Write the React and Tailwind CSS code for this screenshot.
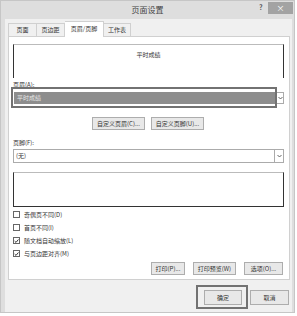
import React from "react";

const font = { fontFamily: '"Noto Sans CJK SC", "Noto Sans", sans-serif' };

function Btn({ children, className = "" }) {
  return (
    <div
      className={
        "flex items-center justify-center border border-[#adadad] bg-[#e8e8e8] text-[6px] text-[#333] leading-none " +
        className
      }
    >
      {children}
    </div>
  );
}

function Check({ label, checked }) {
  return (
    <div className="flex h-[13px] items-center gap-[4px] pl-[4px]">
      <div className="flex h-[7px] w-[7px] items-center justify-center border border-[#666] bg-white">
        {checked && (
          <svg width="6" height="6" viewBox="0 0 6 6">
            <path d="M0.8 3.1 L2.4 4.7 L5.3 1.2" stroke="#222" strokeWidth="1.1" fill="none" />
          </svg>
        )}
      </div>
      <span className="text-[6px] leading-none text-[#333]">{label}</span>
    </div>
  );
}

function Arrow() {
  return (
    <svg width="5" height="4" viewBox="0 0 5 4">
      <path d="M0.5 1 L2.5 3 L4.5 1" stroke="#555" strokeWidth="0.9" fill="none" />
    </svg>
  );
}

export default function App() {
  return (
    <div className="h-[316px] w-[297px] overflow-hidden bg-white" style={font}>
      <div className="flex h-[313px] w-[295px] flex-col border border-[#c6c6c6] bg-[#dedede]">
        {/* title bar */}
        <div className="relative flex h-[18px] items-center justify-center">
          <span className="text-[8px] leading-none text-[#444]">页面设置</span>
          <span className="absolute left-[258px] top-[3px] text-[7px] font-bold leading-none text-[#555]">?</span>
          <div className="absolute left-[267px] top-[1px] flex h-[12px] w-[25px] items-center justify-center bg-[#a3a3a3] text-[8px] leading-none text-white">
            ×
          </div>
        </div>

        {/* client */}
        <div className="ml-[4px] mr-[2px] flex flex-1 flex-col bg-[#f0f0f0] pl-[3px] pr-[2px]">
          {/* tabs */}
          <div className="flex h-[17px] items-end pt-[2px]">
            <div className="flex h-[13px] w-[29px] items-center justify-center border border-b-0 border-[#d0d0d0] bg-[#f0f0f0] text-[6px] leading-none text-[#333]">
              页面
            </div>
            <div className="flex h-[13px] w-[28px] items-center justify-center border border-b-0 border-l-0 border-[#d0d0d0] bg-[#f0f0f0] text-[6px] leading-none text-[#333]">
              页边距
            </div>
            <div className="relative -mb-[1px] flex h-[16px] w-[39px] items-center justify-center border border-b-0 border-l-0 border-[#d0d0d0] bg-white pb-[2px] text-[6px] leading-none text-[#333]">
              页眉/页脚
            </div>
            <div className="flex h-[13px] w-[27px] items-center justify-center border border-b-0 border-l-0 border-[#d0d0d0] bg-[#f0f0f0] text-[6px] leading-none text-[#333]">
              工作表
            </div>
          </div>

          {/* panel */}
          <div className="flex h-[244px] flex-col border border-[#d0d0d0] bg-white">
            <div className="ml-[4px] mr-[5px] mt-[7px] flex h-[34px] items-start justify-center border-x border-t border-x-[#333] border-t-[#bbb] pt-[7px]">
              <span className="text-[6px] leading-none text-[#333]">平时成绩</span>
            </div>

            <div className="ml-[4px] mt-[2px] flex h-[9px] items-center text-[6px] leading-none text-[#333]">页眉(A):</div>

            <div className="ml-[5px] mr-[5px] mt-[3px] flex h-[12px]">
              <div className="relative flex-1">
                <div className="flex h-full items-center bg-[#8d8d8d] pl-[3px] text-[6px] leading-none text-[#e8e8e8]">
                  平时成绩
                </div>
                <div className="pointer-events-none absolute -bottom-[4px] -left-[3px] -right-[2px] -top-[5px] border-2 border-[#727272]" />
              </div>
              <div className="ml-[1px] flex w-[8px] items-center justify-center border border-[#ababab] bg-white">
                <Arrow />
              </div>
            </div>

            <div className="mt-[13px] flex justify-center gap-[6px] pr-[2px]">
              <Btn className="h-[13px] w-[53px]">自定义页眉(C)...</Btn>
              <Btn className="h-[13px] w-[53px]">自定义页脚(U)...</Btn>
            </div>

            <div className="ml-[4px] mt-[8px] flex h-[9px] items-center text-[6px] leading-none text-[#333]">页脚(F):</div>

            <div className="ml-[4px] mr-[5px] mt-[2px] flex h-[14px] border border-[#ababab]">
              <div className="flex flex-1 items-center pl-[2px] text-[6px] leading-none text-[#333]">(无)</div>
              <div className="flex w-[9px] items-center justify-center border-l border-[#ababab]">
                <Arrow />
              </div>
            </div>

            <div className="ml-[4px] mr-[5px] mt-[9px] h-[35px] border-x border-b border-t border-x-[#333] border-b-[#333] border-t-[#bbb]" />

            <div className="mt-[1px] flex flex-col">
              <Check label="奇偶页不同(D)" />
              <Check label="首页不同(I)" />
              <Check label="随文档自动缩放(L)" checked />
              <Check label="与页边距对齐(M)" checked />
            </div>

            <div className="mr-[6px] mt-[2px] flex justify-end gap-[8px]">
              <Btn className="h-[13px] w-[34px]">打印(P)...</Btn>
              <Btn className="h-[13px] w-[43px]">打印预览(W)</Btn>
              <Btn className="h-[13px] w-[39px]">选项(O)...</Btn>
            </div>
          </div>

          {/* bottom buttons */}
          <div className="mt-[10px] flex justify-end gap-[8px] pr-[1px]">
            <div className="relative">
              <Btn className="h-[15px] w-[38px]">确定</Btn>
              <div className="pointer-events-none absolute -bottom-[4px] -left-[8px] -right-[6px] -top-[5px] border-2 border-[#727272]" />
            </div>
            <Btn className="h-[15px] w-[39px]">取消</Btn>
          </div>
        </div>
      </div>
    </div>
  );
}
